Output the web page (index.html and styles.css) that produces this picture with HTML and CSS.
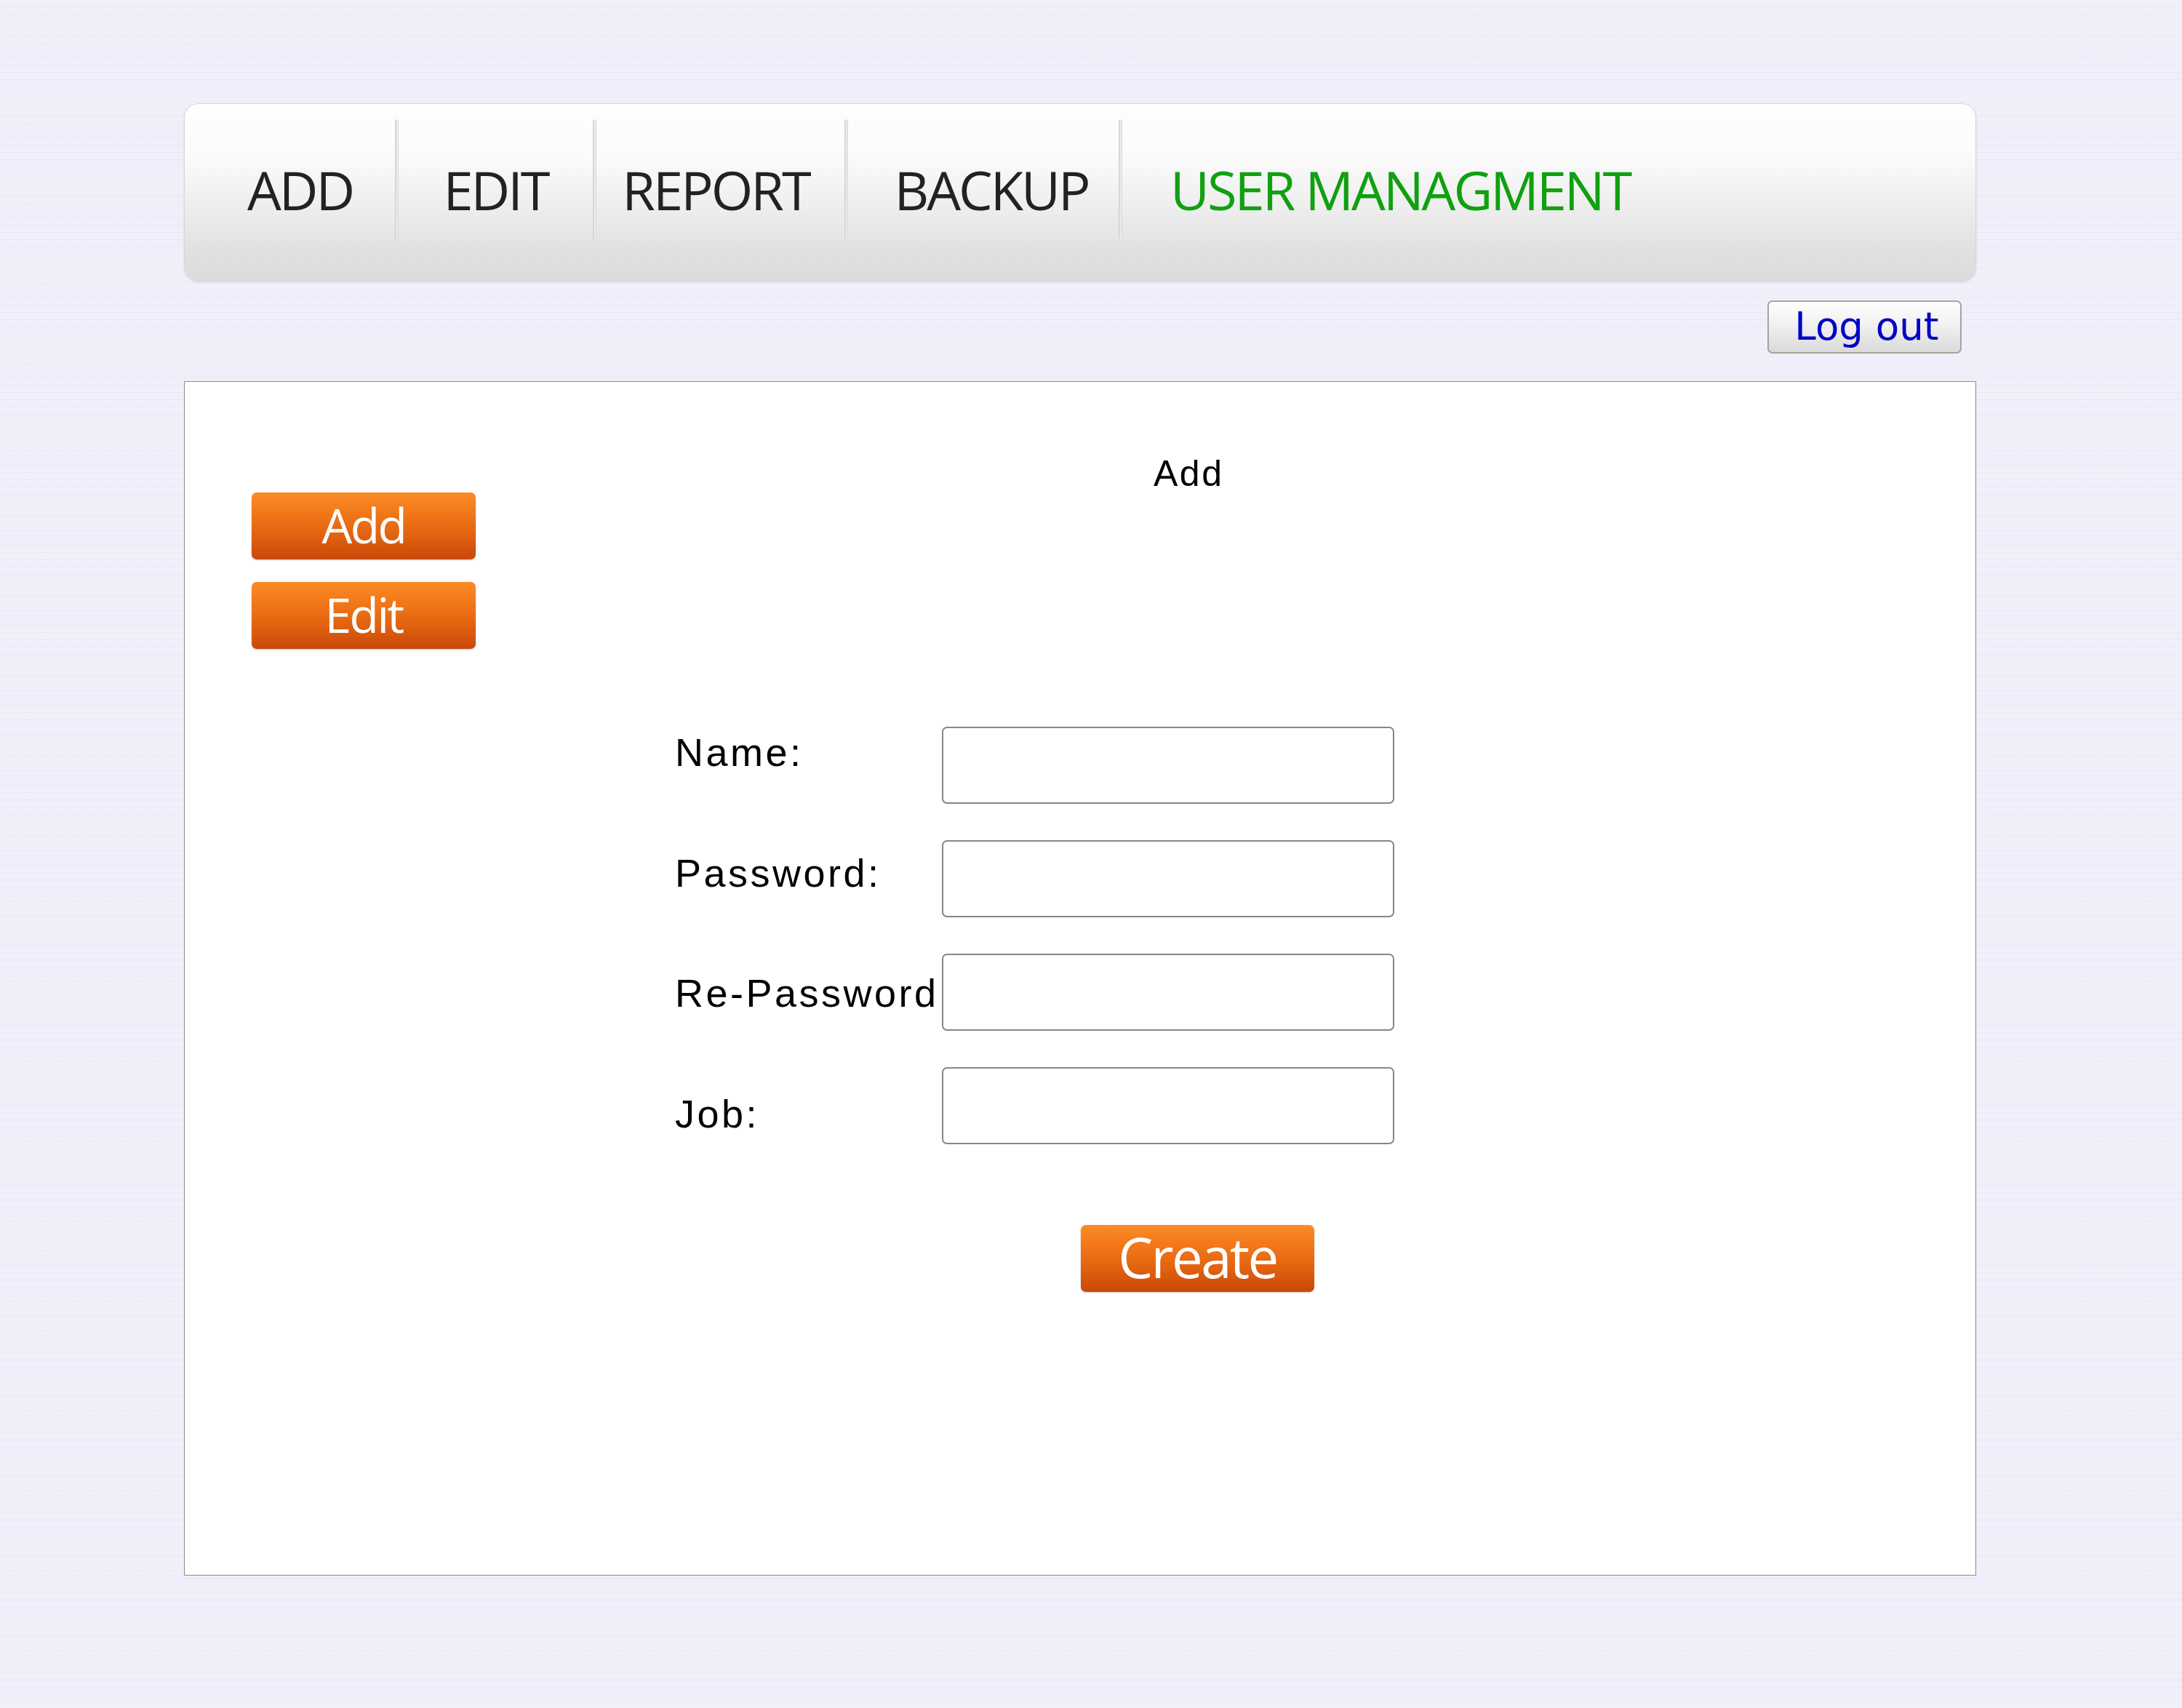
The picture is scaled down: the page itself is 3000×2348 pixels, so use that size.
FILE: index.html
```html
<!DOCTYPE html>
<html lang="en">
<head>
<meta charset="utf-8">
<title>User Managment</title>
<link rel="stylesheet" href="styles.css">
</head>
<body>
<div class="page">
  <nav class="topnav">
    <a class="nav-item item-add">ADD</a>
    <span class="sep"></span>
    <a class="nav-item item-edit">EDIT</a>
    <span class="sep"></span>
    <a class="nav-item item-report">REPORT</a>
    <span class="sep"></span>
    <a class="nav-item item-backup">BACKUP</a>
    <span class="sep"></span>
    <a class="nav-item item-user active">USER MANAGMENT</a>
  </nav>
  <div class="logout-row"><button class="logout">Log out</button></div>
  <section class="panel">
    <aside class="side">
      <button class="orange side-btn">Add</button>
      <button class="orange side-btn">Edit</button>
    </aside>
    <div class="main">
      <h2 class="title">Add</h2>
      <form class="form">
        <div class="labels">
          <label class="lbl">Name:</label>
          <label class="lbl">Password:</label>
          <label class="lbl">Re-Password</label>
          <label class="lbl">Job:</label>
        </div>
        <div class="fields">
          <input class="field" type="text">
          <input class="field" type="password">
          <input class="field" type="password">
          <input class="field" type="text">
        </div>
      </form>
      <button class="orange create">Create</button>
    </div>
  </section>
</div>
</body>
</html>
```
FILE: styles.css
```css
html, body {
  margin: 0;
  padding: 0;
}
body {
  width: 3000px;
  min-height: 2348px;
  background-color: #f0effa;
  background-image: repeating-linear-gradient(to bottom, rgba(255,255,255,0) 0px, rgba(255,255,255,0) 9px, rgba(222,220,242,0.35) 9px, rgba(222,220,242,0.35) 10px);
}
.page {
  padding: 142px 0 0 253px;
  width: 2464px;
}
.topnav {
  display: flex;
  height: 244px;
  box-sizing: border-box;
  border: 1px solid #d6d6d6;
  border-radius: 20px;
  background: linear-gradient(to bottom, #fefefe 0%, #fbfbfb 30%, #ececec 62%, #e0e0e0 85%, #dcdcdc 100%);
  box-shadow: 0 2px 3px rgba(0,0,0,0.10);
}
.nav-item {
  display: flex;
  align-items: center;
  justify-content: center;
  box-sizing: border-box;
  padding-bottom: 8px;
  font-family: "Open Sans", "Liberation Sans", sans-serif;
  font-size: 74px;
  letter-spacing: -3px;
  color: #222222;
  white-space: nowrap;
}
.item-add { width: 289px; padding-left: 28px; }
.item-edit { width: 267px; }
.item-report { width: 341px; padding-right: 13px; }
.item-backup { width: 372px; padding-left: 22px; }
.item-user { justify-content: flex-start; padding-left: 66px; }
.nav-item.active { color: #10a010; }
.sep {
  width: 5px;
  height: 165px;
  margin-top: 21px;
  border-radius: 3px;
  background: linear-gradient(to right, #cdcdcd 0%, #e2e2e2 40%, #f2f2f2 60%, #d2d2d2 100%);
}
.logout-row {
  display: flex;
  justify-content: flex-end;
  padding-right: 20px;
  margin-top: 27px;
}
.logout {
  width: 267px;
  height: 73px;
  box-sizing: border-box;
  padding: 0 0 2px 6px;
  border: 2px solid #ad9f9c;
  border-radius: 7px;
  background: linear-gradient(to bottom, #fdfdfd 0%, #f3f3f3 40%, #dadada 100%);
  font-family: "DejaVu Sans", Verdana, sans-serif;
  font-size: 53px;
  line-height: 1;
  color: #0000c8;
}
.panel {
  margin-top: 38px;
  height: 1642px;
  box-sizing: border-box;
  border: 1px solid #8c8c8c;
  background: #ffffff;
  display: flex;
}
.side {
  display: flex;
  flex-direction: column;
  gap: 31px;
  padding: 152px 0 0 92px;
}
.orange {
  display: flex;
  align-items: center;
  justify-content: center;
  box-sizing: border-box;
  padding: 0 0 4px 0;
  border: none;
  border-radius: 7px;
  background: linear-gradient(to bottom, #fb8b27 0%, #f27819 30%, #e1620f 65%, #c9470a 100%);
  box-shadow: 0 1px 2px rgba(0,0,0,0.25);
  font-family: "Open Sans", "Liberation Sans", sans-serif;
  color: #ffffff;
  line-height: 1;
}
.side-btn {
  width: 308px;
  height: 92px;
  font-size: 66px;
  letter-spacing: -2.5px;
}
.main {
  display: flex;
  flex-direction: column;
  align-items: flex-start;
  padding-top: 96px;
}
.title {
  margin: 0 0 0 932px;
  font-family: "Liberation Sans", Arial, sans-serif;
  font-size: 50px;
  line-height: 60px;
  font-weight: normal;
  letter-spacing: 2.5px;
  color: #000000;
}
.form {
  display: flex;
  margin: 318px 0 0 274px;
}
.labels {
  display: flex;
  flex-direction: column;
  gap: 103.5px;
  width: 367px;
  padding-top: 4px;
}
.lbl {
  font-family: "Liberation Sans", Arial, sans-serif;
  font-size: 54px;
  line-height: 62px;
  letter-spacing: 3.5px;
  color: #000000;
  white-space: nowrap;
}
.fields {
  display: flex;
  flex-direction: column;
  gap: 50px;
}
.field {
  width: 622px;
  height: 106px;
  box-sizing: border-box;
  border: 2px solid #868686;
  border-radius: 7px;
  background: #ffffff;
  margin: 0;
}
.create {
  margin: 111px 0 0 832px;
  width: 321px;
  height: 92px;
  font-size: 76px;
  letter-spacing: -2.5px;
}
```
